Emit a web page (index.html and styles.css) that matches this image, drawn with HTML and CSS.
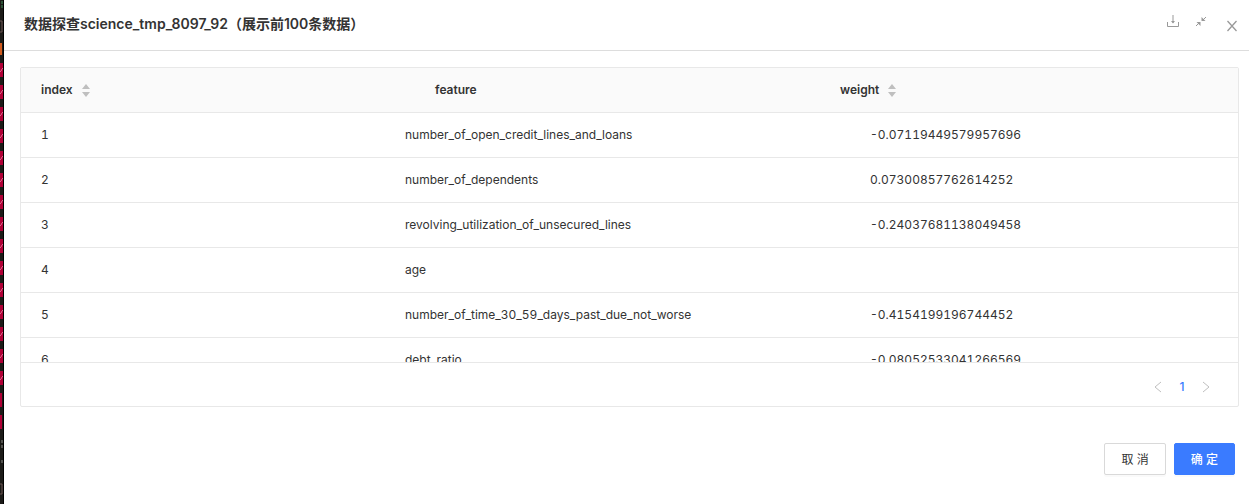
FILE: index.html
```
<!DOCTYPE html>
<html lang="zh-CN">
<head>
    <meta charset="UTF-8">
    <meta name="viewport" content="width=device-width, initial-scale=1.0">
    <title>数据探查</title>
    <link rel="stylesheet" href="styles.css">
</head>
<body>
    <!-- Sliver of the editor behind the drawer -->
    <svg class="backdrop" aria-hidden="true">
        <defs>
            <pattern id="mark" width="4" height="22" y="63" patternUnits="userSpaceOnUse">
                <rect width="3" height="14" fill="#b00036"/>
                <path d="M0 9l1-1 1-2 1-1" fill="none" stroke="#d9668a"/>
            </pattern>
        </defs>
        <rect width="4" height="100%" fill="#1c1b18"/>
        <path d="M2 1v3M2 5v3" stroke="#3f8a55"/>
        <path d="M0 21h2v11H0" fill="none" stroke="#6b5552"/>
        <rect y="43" width="2" height="12" fill="#d05a1e"/>
        <rect y="63" width="3" height="322" fill="url(#mark)"/>
        <path d="M0 393h2v14H0zM0 415h2v14H0z" fill="#b00036"/>
        <path d="M2 440v8M2 460v3" stroke="#8a8a86" stroke-dasharray="3 2"/>
        <path d="M0 484h2v10H0" fill="none" stroke="#6b5552"/>
        <rect x="3" width="1" height="100%" fill="#000"/>
    </svg>

    <div class="drawer">
        <div class="drawer-header">
            <h1>数据探查science_tmp_8097_92（展示前100条数据）</h1>
            <div class="tools">
                <button class="icon-btn" type="button" aria-label="下载">
                    <svg width="14" height="14" viewBox="0 0 14 14" fill="none" stroke="currentColor">
                        <path d="M1.500 8v4.500h11V8M7 1v8"/>
                        <path d="M5 7h4L7 9.500z" fill="currentColor" stroke="none"/>
                    </svg>
                </button>
                <button class="icon-btn" type="button" aria-label="退出全屏">
                    <svg width="14" height="14" viewBox="0 0 14 14" fill="none" stroke="currentColor">
                        <path d="M2 12l3-3M12 3L9 6"/>
                        <path d="M2.500 8h4v4zM11.500 7h-4V3z" fill="currentColor" stroke="none"/>
                    </svg>
                </button>
                <button class="icon-btn close" type="button" aria-label="关闭">
                    <svg width="14" height="14" viewBox="0 0 14 14" fill="none" stroke="currentColor" stroke-width="1.300">
                        <path d="M2.500 1l9 10M11.500 1l-9 10"/>
                    </svg>
                </button>
            </div>
        </div>

        <div class="table-box">
            <table class="table-head">
                <colgroup>
                    <col class="head-index">
                    <col class="head-feature">
                    <col>
                </colgroup>
                <thead>
                    <tr>
                        <th>index
                            <svg class="sorter" width="8" height="13" viewBox="0 0 8 13"><path d="M4 0l4 5H0zM0 8h8l-4 5z"/></svg>
                        </th>
                        <th>feature</th>
                        <th>weight
                            <svg class="sorter" width="8" height="13" viewBox="0 0 8 13"><path d="M4 0l4 5H0zM0 8h8l-4 5z"/></svg>
                        </th>
                    </tr>
                </thead>
            </table>
            <div class="table-scroll">
                <table>
                    <colgroup>
                        <col class="body-index">
                        <col class="body-feature">
                        <col>
                    </colgroup>
                    <tbody>
                        <tr>
                            <td>1</td>
                            <td>number_of_open_credit_lines_and_loans</td>
                            <td>-0.07119449579957696</td>
                        </tr>
                        <tr>
                            <td>2</td>
                            <td>number_of_dependents</td>
                            <td>0.07300857762614252</td>
                        </tr>
                        <tr>
                            <td>3</td>
                            <td>revolving_utilization_of_unsecured_lines</td>
                            <td>-0.24037681138049458</td>
                        </tr>
                        <tr>
                            <td>4</td>
                            <td>age</td>
                            <td></td>
                        </tr>
                        <tr>
                            <td>5</td>
                            <td>number_of_time_30_59_days_past_due_not_worse</td>
                            <td>-0.4154199196744452</td>
                        </tr>
                        <tr>
                            <td>6</td>
                            <td>debt_ratio</td>
                            <td>-0.08052533041266569</td>
                        </tr>
                    </tbody>
                </table>
            </div>
            <div class="pagination">
                <button type="button" aria-label="上一页" disabled>
                    <svg width="10" height="12" viewBox="0 0 10 12" fill="none" stroke="currentColor"><path d="M8 1L2 6l6 5"/></svg>
                </button>
                <button class="current" type="button">1</button>
                <button type="button" aria-label="下一页" disabled>
                    <svg width="10" height="12" viewBox="0 0 10 12" fill="none" stroke="currentColor"><path d="M2 1l6 5-6 5"/></svg>
                </button>
            </div>
        </div>

        <div class="drawer-footer">
            <button class="btn" type="button">取 消</button>
            <button class="btn btn-primary" type="button">确 定</button>
        </div>
    </div>
</body>
</html>
```
FILE: styles.css
```
* {
    box-sizing: border-box;
}
body {
    font-family: Inter, "Noto Sans CJK SC", sans-serif;
    font-size: 12px;
    line-height: 20px;
    color: #333;
    display: flex;
    height: 100vh;
    margin: 0;
    background: #fff;
}
button {
    font: inherit;
    padding: 0;
    border: none;
    background: none;
    cursor: pointer;
}
.backdrop {
    flex: none;
    width: 4px;
    height: 100%;
}
.drawer {
    flex: 1;
    min-width: 0;
    display: flex;
    flex-direction: column;
}
.drawer-header {
    display: flex;
    justify-content: space-between;
    padding: 14px 10px 16px 20px;
    border-bottom: 1px solid #ddd;
}
h1 {
    margin: 0;
    font-size: 14px;
    font-weight: 600;
    line-height: 20px;
}
.tools {
    display: flex;
    align-items: flex-start;
    gap: 14px;
}
.icon-btn {
    display: flex;
    color: #999;
}
.close {
    align-self: flex-end;
    margin-left: 3px;
}
.table-box {
    flex: 1;
    min-height: 0;
    display: flex;
    flex-direction: column;
    margin: 16px 10px 0 16px;
    border: 1px solid #e8e8e8;
    border-radius: 2px;
}
table {
    width: 100%;
    table-layout: fixed;
    border-collapse: separate;
    border-spacing: 0;
}
th, td {
    height: 45px;
    padding: 0 20px;
    text-align: left;
    border-bottom: 1px solid #e8e8e8;
}
th {
    font-weight: 600;
    background-color: #fafafa;
}
td {
    font-variant-numeric: tabular-nums;
}
.head-index {
    width: 394px;
}
.head-feature {
    width: 405px;
}
.body-index {
    width: 364px;
}
.body-feature {
    width: 465px;
}
.sorter {
    margin-left: 6px;
    vertical-align: middle;
    fill: #bfbfbf;
}
.table-scroll {
    flex: 1;
    min-height: 0;
    overflow-y: auto;
    scrollbar-width: none;
}
.pagination {
    display: flex;
    align-items: center;
    justify-content: flex-end;
    padding: 14px 20px 9px;
    border-top: 1px solid #e8e8e8;
}
.pagination button {
    display: flex;
    align-items: center;
    justify-content: center;
    width: 24px;
    height: 20px;
    color: #bfbfbf;
}
.pagination .current {
    color: #3a7bff;
    font-weight: 500;
}
.drawer-footer {
    display: flex;
    justify-content: flex-end;
    gap: 8px;
    padding: 36px 14px 29px;
}
.btn {
    height: 32px;
    padding: 2px 16px 0;
    border: 1px solid #d9d9d9;
    border-radius: 2px;
    background: #fff;
    color: #333;
    box-shadow: 0 2px 0 rgba(0, 0, 0, 0.02);
}
.btn-primary {
    border-color: #3a7bff;
    background: #3a7bff;
    color: #fff;
    font-weight: 500;
}
```
